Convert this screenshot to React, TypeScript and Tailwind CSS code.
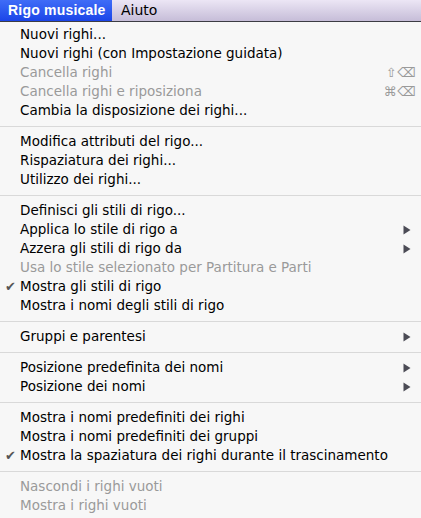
import React from "react";

type Item =
  | { kind: "sep" }
  | {
      kind: "item";
      label: string;
      disabled?: boolean;
      checked?: boolean;
      submenu?: boolean;
      shortcut?: string;
    };

const items: Item[] = [
  { kind: "item", label: "Nuovi righi..." },
  { kind: "item", label: "Nuovi righi (con Impostazione guidata)" },
  { kind: "item", label: "Cancella righi", disabled: true, shortcut: "⇧⌫" },
  { kind: "item", label: "Cancella righi e riposiziona", disabled: true, shortcut: "⌘⌫" },
  { kind: "item", label: "Cambia la disposizione dei righi..." },
  { kind: "sep" },
  { kind: "item", label: "Modifica attributi del rigo..." },
  { kind: "item", label: "Rispaziatura dei righi..." },
  { kind: "item", label: "Utilizzo dei righi..." },
  { kind: "sep" },
  { kind: "item", label: "Definisci gli stili di rigo..." },
  { kind: "item", label: "Applica lo stile di rigo a", submenu: true },
  { kind: "item", label: "Azzera gli stili di rigo da", submenu: true },
  { kind: "item", label: "Usa lo stile selezionato per Partitura e Parti", disabled: true },
  { kind: "item", label: "Mostra gli stili di rigo", checked: true },
  { kind: "item", label: "Mostra i nomi degli stili di rigo" },
  { kind: "sep" },
  { kind: "item", label: "Gruppi e parentesi", submenu: true },
  { kind: "sep" },
  { kind: "item", label: "Posizione predefinita dei nomi", submenu: true },
  { kind: "item", label: "Posizione dei nomi", submenu: true },
  { kind: "sep" },
  { kind: "item", label: "Mostra i nomi predefiniti dei righi" },
  { kind: "item", label: "Mostra i nomi predefiniti dei gruppi" },
  { kind: "item", label: "Mostra la spaziatura dei righi durante il trascinamento", checked: true },
  { kind: "sep" },
  { kind: "item", label: "Nascondi i righi vuoti", disabled: true },
  { kind: "item", label: "Mostra i righi vuoti", disabled: true },
];

function Arrow() {
  return (
    <svg width="8" height="10" viewBox="0 0 8 10" className="block">
      <path d="M0.5 0.5 L7.5 5 L0.5 9.5 Z" fill="#4b4b55" />
    </svg>
  );
}

export default function App() {
  return (
    <div
      className="w-[421px] h-[518px] overflow-hidden bg-[#f7f7f7] text-black"
      style={{ fontFamily: '"DejaVu Sans", sans-serif' }}
    >
      <div className="h-[22px] flex items-stretch bg-gradient-to-b from-[#ece6f5] to-[#c6bdd8] border-b border-[#3c3c44]">
        <div
          className="flex items-center whitespace-nowrap pl-[8px] w-[112px] bg-gradient-to-b from-[#3f6cf7] to-[#1b44e8] text-white font-bold text-[14px] tracking-[0.2px]"
          style={{ fontFamily: '"Liberation Sans", Arial, sans-serif' }}
        >
          Rigo musicale
        </div>
        <div className="flex items-center pl-[9px] text-[14px] text-black whitespace-nowrap">Aiuto</div>
      </div>
      <div className="pt-[3px] flex flex-col">
        {items.map((it, i) =>
          it.kind === "sep" ? (
            <div key={i} className="h-[12px] flex items-center">
              <div className="h-px w-full bg-[#d9d9d9]" />
            </div>
          ) : (
            <div key={i} className="h-[19px] flex items-center text-[13.5px] leading-none">
              <div className="w-[20px] flex justify-center text-[#555] text-[13px] pl-[1px]">
                {it.checked ? "✔" : ""}
              </div>
              <div className={`flex-1 whitespace-nowrap ${it.disabled ? "text-[#9a9a9a]" : "text-black"}`}>
                {it.label}
              </div>
              {it.shortcut && (
                <div className="pr-[4px] text-[#9a9a9a] text-[13px] tracking-[1px]">{it.shortcut}</div>
              )}
              {it.submenu && (
                <div className="pr-[10px]">
                  <Arrow />
                </div>
              )}
            </div>
          )
        )}
      </div>
    </div>
  );
}
